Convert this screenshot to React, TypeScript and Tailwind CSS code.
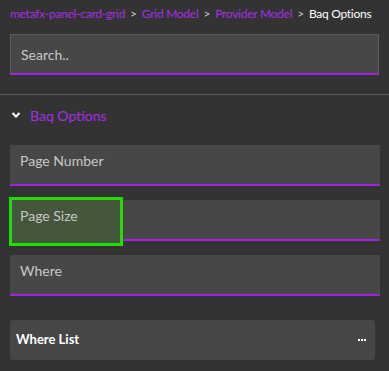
import React from "react";

const font = { fontFamily: 'Lato, "Noto Sans", sans-serif' };

function Field({ label, highlight }: { label: string; highlight?: boolean }) {
  return (
    <div className="relative h-[41px] bg-[#474747] border-b-2 border-[#a21fe6] flex items-start pt-[6px] px-[10px]">
      {highlight && (
        <div className="absolute left-[-1px] top-[-3px] w-[114px] h-[49px] border-[3px] border-[#22dd00] bg-[#44563c]" />
      )}
      <span className="relative text-[14px] leading-[20px] text-[#c8c8c8]">{label}</span>
    </div>
  );
}

export default function App() {
  return (
    <div style={font} className="w-[389px] h-[371px] bg-[#333333] overflow-hidden">
      <div className="flex items-center h-[27px] px-[10px] text-[12px] tracking-[-0.27px] whitespace-nowrap">
        <span className="text-[#a82ce8]">metafx-panel-card-grid</span>
        <span className="text-[#c8c8c8] mx-[5px]">&gt;</span>
        <span className="text-[#a82ce8]">Grid Model</span>
        <span className="text-[#c8c8c8] mx-[5px]">&gt;</span>
        <span className="text-[#a82ce8]">Provider Model</span>
        <span className="text-[#c8c8c8] mx-[5px]">&gt;</span>
        <span className="text-white">Baq Options</span>
      </div>
      <div className="px-[10px] pt-[7px]">
        <div className="h-[41px] bg-[#474747] border border-b-2 border-[#5c5c5c] border-b-[#a21fe6] flex items-center px-[10px]">
          <span className="text-[14px] text-[#c8c8c8]">Search..</span>
        </div>
      </div>
      <div className="mt-[19px] h-px bg-[#5a5a5a]" />
      <div className="flex items-center h-[40px] px-[11px]">
        <svg width="10" height="8" viewBox="0 0 10 8" className="mr-[9px]">
          <path d="M1.5 2 L5 5.5 L8.5 2" stroke="white" strokeWidth="2" fill="none" />
        </svg>
        <span className="text-[14px] text-[#a82ce8]">Baq Options</span>
      </div>
      <div className="pl-[10px] pr-[9px] pt-[10px] flex flex-col gap-[14px]">
        <Field label="Page Number" />
        <Field label="Page Size" highlight />
        <Field label="Where" />
      </div>
      <div className="pl-[10px] pr-[14px] pt-[24px]">
        <div className="h-[40px] bg-[#464646] rounded-[3px] flex items-center justify-between pl-[6px] pr-[9px]">
          <span className="text-[13px] font-bold text-white">Where List</span>
          <span className="flex gap-[1px]">
            <span className="w-[2px] h-[2px] bg-white" />
            <span className="w-[2px] h-[2px] bg-white" />
            <span className="w-[2px] h-[2px] bg-white" />
          </span>
        </div>
      </div>
    </div>
  );
}
